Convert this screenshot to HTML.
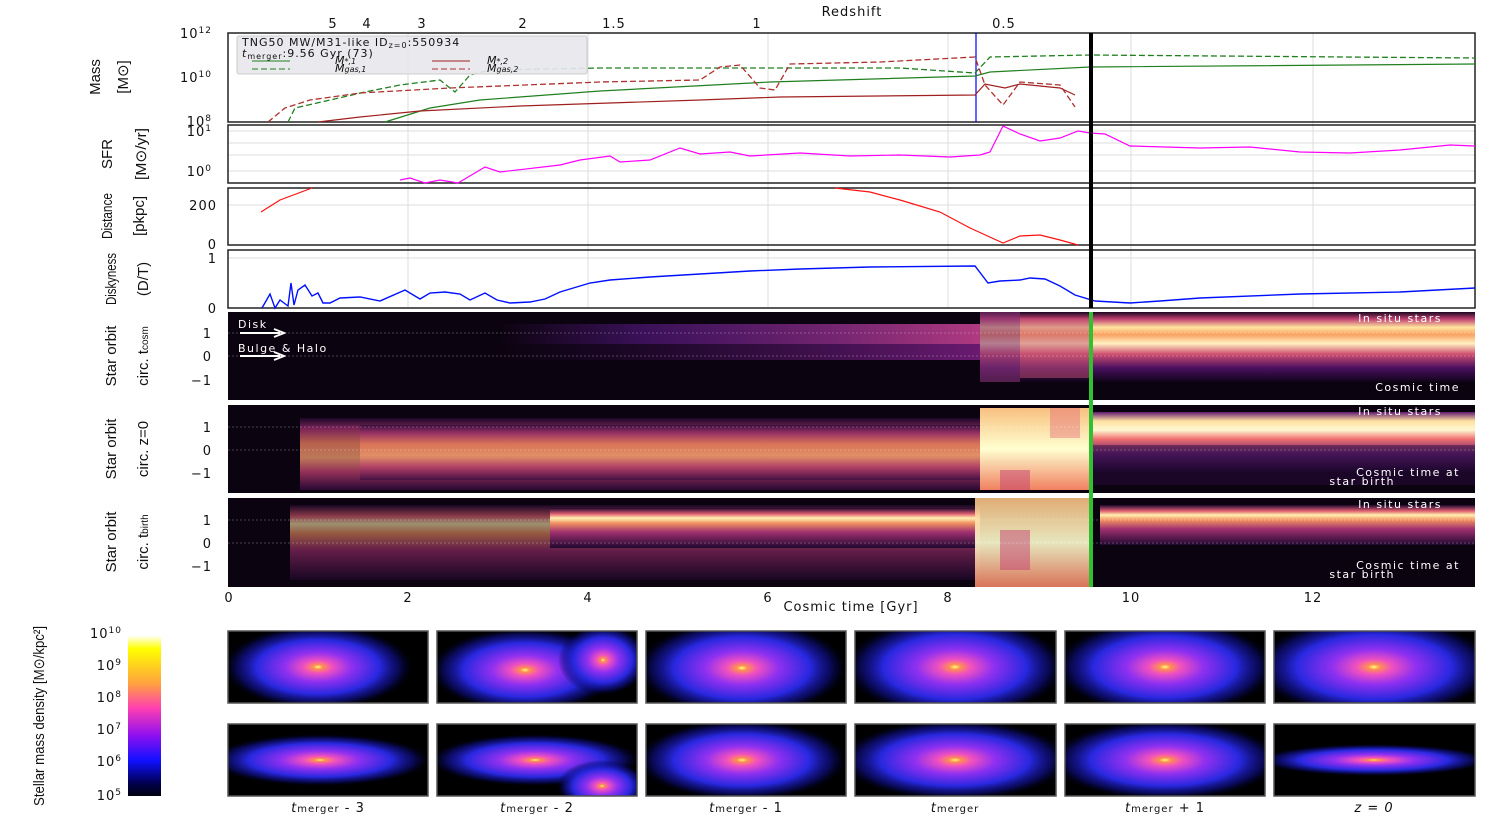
<!DOCTYPE html>
<html><head><meta charset="utf-8"><style>
html,body{margin:0;padding:0;background:#fff;}
svg{display:block;}
text{font-family:"DejaVu Sans","Liberation Sans",sans-serif;fill:#111;}
.lab{font-family:"Liberation Sans",sans-serif;font-size:15px;}
.tk{font-size:13px;letter-spacing:1px;}
.an{font-size:11px;fill:#fff;letter-spacing:1.5px;}
</style></head><body>
<svg width="1495" height="824" viewBox="0 0 1495 824" xmlns="http://www.w3.org/2000/svg">
<defs>
<linearGradient id="cb" x1="0" y1="0" x2="0" y2="1">
<stop offset="0" stop-color="#fffff0"/><stop offset="0.08" stop-color="#ffff00"/><stop offset="0.3" stop-color="#ffa040"/><stop offset="0.45" stop-color="#ff40b0"/><stop offset="0.62" stop-color="#9010f0"/><stop offset="0.78" stop-color="#1010ff"/><stop offset="0.92" stop-color="#000050"/><stop offset="1" stop-color="#000010"/>
</linearGradient>
<radialGradient id="gal">
<stop offset="0" stop-color="#ffff80"/><stop offset="0.05" stop-color="#ff9050"/><stop offset="0.15" stop-color="#f050c0"/><stop offset="0.35" stop-color="#9030f0"/><stop offset="0.65" stop-color="#2828e0"/><stop offset="0.85" stop-color="#101090" stop-opacity="0.6"/><stop offset="1" stop-color="#000030" stop-opacity="0"/>
</radialGradient>
<linearGradient id="h1a" x1="0" y1="0" x2="1" y2="0"><stop offset="0" stop-color="#5a1a8a" stop-opacity="0"/><stop offset="0.3" stop-color="#5a1a8a" stop-opacity="0.6"/><stop offset="1" stop-color="#b03a80"/></linearGradient>
<linearGradient id="h1b" x1="0" y1="0" x2="1" y2="0"><stop offset="0" stop-color="#3a0f60" stop-opacity="0"/><stop offset="1" stop-color="#6a1a70"/></linearGradient>
<linearGradient id="h1c" x1="0" y1="0" x2="0" y2="1"><stop offset="0" stop-color="#1a0520"/><stop offset="0.1" stop-color="#c04070"/><stop offset="0.22" stop-color="#ffe6a0"/><stop offset="0.32" stop-color="#f8a060"/><stop offset="0.45" stop-color="#fff0c0"/><stop offset="0.6" stop-color="#d05070"/><stop offset="0.8" stop-color="#4a1060"/><stop offset="1" stop-color="#100418"/></linearGradient>
<linearGradient id="h2" x1="0" y1="0" x2="0" y2="1"><stop offset="0" stop-color="#200830"/><stop offset="0.15" stop-color="#a03070"/><stop offset="0.35" stop-color="#f08060"/><stop offset="0.55" stop-color="#f8a070"/><stop offset="0.75" stop-color="#c04070"/><stop offset="1" stop-color="#300a40"/></linearGradient>
<linearGradient id="h2r" x1="0" y1="0" x2="0" y2="1"><stop offset="0" stop-color="#601a70"/><stop offset="0.15" stop-color="#ffe0a0"/><stop offset="0.3" stop-color="#fff8d0"/><stop offset="0.45" stop-color="#f07070"/><stop offset="0.7" stop-color="#602070"/><stop offset="1" stop-color="#100418"/></linearGradient>
<linearGradient id="h3" x1="0" y1="0" x2="0" y2="1"><stop offset="0" stop-color="#200830"/><stop offset="0.15" stop-color="#e06070"/><stop offset="0.25" stop-color="#fff0b0"/><stop offset="0.38" stop-color="#f09060"/><stop offset="0.6" stop-color="#a03070"/><stop offset="1" stop-color="#200830"/></linearGradient>
<linearGradient id="hm" x1="0" y1="0" x2="0" y2="1"><stop offset="0" stop-color="#f8c080"/><stop offset="0.5" stop-color="#ffffd0"/><stop offset="1" stop-color="#f08060"/></linearGradient>
<clipPath id="c1"><rect x="228" y="631" width="200" height="72"/></clipPath>
<clipPath id="c2"><rect x="437" y="631" width="200" height="72"/></clipPath>
<clipPath id="c3"><rect x="646" y="631" width="200" height="72"/></clipPath>
<clipPath id="c4"><rect x="855" y="631" width="201" height="72"/></clipPath>
<clipPath id="c5"><rect x="1065" y="631" width="200" height="72"/></clipPath>
<clipPath id="c6"><rect x="1274" y="631" width="201" height="72"/></clipPath>
<clipPath id="d1"><rect x="228" y="724" width="200" height="72"/></clipPath>
<clipPath id="d2"><rect x="437" y="724" width="200" height="72"/></clipPath>
<clipPath id="d3"><rect x="646" y="724" width="200" height="72"/></clipPath>
<clipPath id="d4"><rect x="855" y="724" width="201" height="72"/></clipPath>
<clipPath id="d5"><rect x="1065" y="724" width="200" height="72"/></clipPath>
<clipPath id="d6"><rect x="1274" y="724" width="201" height="72"/></clipPath>
</defs>

<g stroke="#ddd" stroke-width="1">
<line x1="408" y1="33" x2="408" y2="308"/><line x1="588" y1="33" x2="588" y2="308"/><line x1="768" y1="33" x2="768" y2="308"/><line x1="948" y1="33" x2="948" y2="308"/><line x1="1131" y1="33" x2="1131" y2="308"/><line x1="1313" y1="33" x2="1313" y2="308"/>
<line x1="228" y1="131" x2="1475" y2="131"/><line x1="228" y1="143" x2="1475" y2="143"/><line x1="228" y1="155" x2="1475" y2="155"/><line x1="228" y1="171" x2="1475" y2="171"/><line x1="228" y1="205" x2="1475" y2="205"/><line x1="228" y1="258" x2="1475" y2="258"/>
</g>

<text x="852" y="16" class="tk" text-anchor="middle">Redshift</text>
<g class="tk" text-anchor="middle"><text x="333" y="28" class="tk">5</text><text x="367" y="28" class="tk">4</text><text x="422" y="28" class="tk">3</text><text x="523" y="28" class="tk">2</text><text x="614" y="28" class="tk">1.5</text><text x="757" y="28" class="tk">1</text><text x="1004" y="28" class="tk">0.5</text></g>

<rect x="228" y="33" width="1247" height="89" fill="none" stroke="#222" stroke-width="1.5"/>
<line x1="976" y1="33" x2="976" y2="122" stroke="#00f" stroke-width="1.2"/>
<polyline fill="none" stroke="#208020" stroke-width="1.2" points="385,122 430,108 480,100 600,91 770,82 975,76 990,72 1090,67 1475,64"/>
<polyline fill="none" stroke="#a02020" stroke-width="1.2" points="318,122 360,117 420,111 520,106 700,100 780,97 975,95 985,84 1005,88 1020,84 1060,88 1075,95"/>
<polyline fill="none" stroke="#208020" stroke-width="1.3" stroke-dasharray="6,3" points="288,122 295,108 330,100 365,92 400,85 440,80 455,92 470,75 490,70 600,68 900,68 975,73 990,57 1090,55 1475,58"/>
<polyline fill="none" stroke="#b03030" stroke-width="1.3" stroke-dasharray="6,3" points="268,122 285,108 310,100 360,93 450,88 600,82 700,80 720,67 740,65 760,88 775,90 790,64 880,62 975,57 985,85 1003,105 1020,82 1060,85 1075,107"/>
<rect x="237" y="36" width="350" height="38" fill="#e8e8ec" fill-opacity="0.9" stroke="#ccc" rx="2"/>
<text x="242" y="46" font-size="11" letter-spacing="1">TNG50 MW/M31-like ID<tspan font-size="8" dy="2">z=0</tspan><tspan dy="-2">:550934</tspan></text>
<text x="242" y="57" font-size="11" letter-spacing="1"><tspan font-style="italic">t</tspan><tspan font-size="8" dy="2">merger</tspan><tspan dy="-2">:9.56 Gyr (73)</tspan></text>
<line x1="252" y1="61" x2="290" y2="61" stroke="#208020"/><text x="335" y="64" font-size="11" font-style="italic">M<tspan font-size="8">*,1</tspan></text>
<line x1="252" y1="69" x2="290" y2="69" stroke="#208020" stroke-dasharray="6,3"/><text x="335" y="72" font-size="11" font-style="italic">M<tspan font-size="8">gas,1</tspan></text>
<line x1="432" y1="61" x2="470" y2="61" stroke="#a02020"/><text x="487" y="64" font-size="11" font-style="italic">M<tspan font-size="8">*,2</tspan></text>
<line x1="432" y1="69" x2="470" y2="69" stroke="#b03030" stroke-dasharray="6,3"/><text x="487" y="72" font-size="11" font-style="italic">M<tspan font-size="8">gas,2</tspan></text>
<g class="tk" text-anchor="end"><text x="212" y="38">10<tspan font-size="9" dy="-5">12</tspan></text><text x="212" y="82">10<tspan font-size="9" dy="-5">10</tspan></text><text x="212" y="126">10<tspan font-size="9" dy="-5">8</tspan></text></g>
<text class="lab" transform="translate(100,77) rotate(-90)" text-anchor="middle">Mass</text>
<text class="lab" transform="translate(128,77) rotate(-90)" text-anchor="middle">[M⊙]</text>

<rect x="228" y="125" width="1247" height="58" fill="none" stroke="#222" stroke-width="1.5"/>
<polyline fill="none" stroke="#ff00ff" stroke-width="1.2" points="400,180 410,178 425,183 440,180 458,183 485,167 500,172 560,165 580,160 610,156 620,162 650,160 680,148 700,154 730,152 750,156 800,153 850,156 900,155 950,157 980,155 990,152 1003,126 1020,134 1040,141 1060,138 1078,131 1090,133 1105,134 1130,146 1200,148 1250,147 1300,152 1350,153 1400,150 1450,145 1475,146"/>
<g class="tk" text-anchor="end"><text x="212" y="136">10<tspan font-size="9" dy="-5">1</tspan></text><text x="212" y="176">10<tspan font-size="9" dy="-5">0</tspan></text></g>
<text class="lab" transform="translate(112,154) rotate(-90)" text-anchor="middle">SFR</text>
<text class="lab" transform="translate(146,154) rotate(-90)" text-anchor="middle" textLength="52" lengthAdjust="spacingAndGlyphs">[M⊙/yr]</text>

<rect x="228" y="188" width="1247" height="57" fill="none" stroke="#222" stroke-width="1.5"/>
<polyline fill="none" stroke="#ff1010" stroke-width="1.2" points="261,212 280,200 312,188"/>
<polyline fill="none" stroke="#ff1010" stroke-width="1.2" points="835,188 870,192 900,200 940,212 970,228 1003,243 1020,236 1040,235 1060,240 1078,245"/>
<g class="tk" text-anchor="end"><text x="217" y="210">200</text><text x="217" y="249">0</text></g>
<text class="lab" transform="translate(112,216) rotate(-90)" text-anchor="middle" textLength="46" lengthAdjust="spacingAndGlyphs">Distance</text>
<text class="lab" transform="translate(144,216) rotate(-90)" text-anchor="middle" textLength="40" lengthAdjust="spacingAndGlyphs">[pkpc]</text>

<rect x="228" y="250" width="1247" height="58" fill="none" stroke="#222" stroke-width="1.5"/>
<polyline fill="none" stroke="#0010ff" stroke-width="1.4" points="262,308 270,294 275,308 280,300 288,306 291,283 294,305 298,290 305,285 312,296 318,293 323,303 330,303 340,298 360,297 380,301 405,290 420,299 430,293 445,292 460,294 470,300 485,293 497,300 510,303 530,302 545,299 560,292 590,283 610,280 650,277 700,274 750,271 800,269 870,267 975,266 988,283 1000,281 1020,280 1030,278 1045,279 1060,286 1075,295 1095,301 1130,303 1160,301 1200,298 1300,294 1400,292 1475,288"/>
<g class="tk" text-anchor="end"><text x="217" y="263">1</text><text x="217" y="313">0</text></g>
<text class="lab" transform="translate(116,279) rotate(-90)" text-anchor="middle" textLength="52" lengthAdjust="spacingAndGlyphs">Diskyness</text>
<text class="lab" transform="translate(148,279) rotate(-90)" text-anchor="middle">(D/T)</text>

<line x1="1091" y1="33" x2="1091" y2="308" stroke="#000" stroke-width="4"/>

<rect x="228" y="312" width="1247" height="88" fill="#0c0310"/>
<rect x="500" y="324" width="480" height="20" fill="url(#h1a)"/>
<rect x="500" y="344" width="480" height="16" fill="url(#h1b)"/>
<rect x="980" y="312" width="495" height="70" fill="url(#h1c)"/>
<rect x="980" y="312" width="40" height="70" fill="#803070" opacity="0.6"/>
<rect x="1020" y="318" width="70" height="60" fill="#c05070" opacity="0.5"/>
<line x1="228" y1="333" x2="1475" y2="333" stroke="#fff" stroke-opacity="0.5" stroke-dasharray="2,2" stroke-width="0.6"/>
<line x1="228" y1="356" x2="1475" y2="356" stroke="#fff" stroke-opacity="0.5" stroke-dasharray="2,2" stroke-width="0.6"/>
<text x="238" y="328" class="an">Disk</text><path d="M240 333 H280 M274 329 L284 333 L274 337" stroke="#fff" stroke-width="2" fill="none"/>
<text x="238" y="352" class="an">Bulge &amp; Halo</text><path d="M240 356 H280 M274 352 L284 356 L274 360" stroke="#fff" stroke-width="2" fill="none"/>
<text x="1442" y="322" class="an" text-anchor="end">In situ stars</text>
<text x="1460" y="391" class="an" text-anchor="end">Cosmic time</text>

<rect x="228" y="405" width="1247" height="88" fill="#0c0310"/>
<rect x="300" y="418" width="680" height="72" fill="url(#h2)" opacity="0.75"/>
<rect x="360" y="425" width="620" height="55" fill="url(#h2)" opacity="0.6"/>
<rect x="980" y="408" width="110" height="82" fill="url(#hm)"/>
<rect x="1000" y="470" width="30" height="20" fill="#c04070" opacity="0.5"/>
<rect x="1050" y="408" width="30" height="30" fill="#e06070" opacity="0.4"/>
<rect x="1090" y="412" width="385" height="60" fill="url(#h2r)"/>
<rect x="1090" y="445" width="385" height="40" fill="#2a0a40" opacity="0.5"/>
<line x1="228" y1="427" x2="1475" y2="427" stroke="#fff" stroke-opacity="0.5" stroke-dasharray="2,2" stroke-width="0.6"/>
<line x1="228" y1="450" x2="1475" y2="450" stroke="#fff" stroke-opacity="0.5" stroke-dasharray="2,2" stroke-width="0.6"/>
<text x="1442" y="415" class="an" text-anchor="end">In situ stars</text>
<text x="1460" y="476" class="an" text-anchor="end">Cosmic time at</text>
<text x="1395" y="485" class="an" text-anchor="end">star birth</text>

<rect x="228" y="498" width="1247" height="89" fill="#0c0310"/>
<rect x="290" y="505" width="690" height="75" fill="url(#h3)" opacity="0.6"/>
<rect x="550" y="508" width="430" height="40" fill="url(#h3)"/>
<rect x="975" y="498" width="115" height="89" fill="url(#hm)" opacity="0.9"/>
<rect x="1000" y="530" width="30" height="40" fill="#c04070" opacity="0.5"/>
<rect x="1100" y="505" width="375" height="40" fill="url(#h3)"/>
<line x1="228" y1="520" x2="1475" y2="520" stroke="#fff" stroke-opacity="0.5" stroke-dasharray="2,2" stroke-width="0.6"/>
<line x1="228" y1="543" x2="1475" y2="543" stroke="#fff" stroke-opacity="0.5" stroke-dasharray="2,2" stroke-width="0.6"/>
<text x="1442" y="508" class="an" text-anchor="end">In situ stars</text>
<text x="1460" y="569" class="an" text-anchor="end">Cosmic time at</text>
<text x="1395" y="578" class="an" text-anchor="end">star birth</text>

<line x1="1091" y1="312" x2="1091" y2="587" stroke="#30c030" stroke-width="4"/>

<g class="tk" text-anchor="end">
<text x="212" y="338">1</text><text x="212" y="361">0</text><text x="212" y="385">−1</text>
<text x="212" y="432">1</text><text x="212" y="455">0</text><text x="212" y="478">−1</text>
<text x="212" y="525">1</text><text x="212" y="548">0</text><text x="212" y="571">−1</text>
</g>
<text class="lab" transform="translate(116,356) rotate(-90)" text-anchor="middle">Star orbit</text>
<text class="lab" transform="translate(148,356) rotate(-90)" text-anchor="middle">circ. t<tspan font-size="10">cosm</tspan></text>
<text class="lab" transform="translate(116,449) rotate(-90)" text-anchor="middle">Star orbit</text>
<text class="lab" transform="translate(148,449) rotate(-90)" text-anchor="middle">circ. z=0</text>
<text class="lab" transform="translate(116,542) rotate(-90)" text-anchor="middle">Star orbit</text>
<text class="lab" transform="translate(148,542) rotate(-90)" text-anchor="middle">circ. t<tspan font-size="10">birth</tspan></text>

<g class="tk" text-anchor="middle"><text x="229" y="602">0</text><text x="408" y="602">2</text><text x="588" y="602">4</text><text x="768" y="602">6</text><text x="948" y="602">8</text><text x="1131" y="602">10</text><text x="1313" y="602">12</text></g>
<text x="851" y="611" class="tk" text-anchor="middle">Cosmic time [Gyr]</text>

<rect x="128" y="636" width="33" height="160" fill="url(#cb)"/>
<g class="tk" text-anchor="end" font-size="12">
<text x="122" y="638">10<tspan font-size="9" dy="-5">10</tspan></text>
<text x="122" y="670">10<tspan font-size="9" dy="-5">9</tspan></text>
<text x="122" y="702">10<tspan font-size="9" dy="-5">8</tspan></text>
<text x="122" y="734">10<tspan font-size="9" dy="-5">7</tspan></text>
<text x="122" y="766">10<tspan font-size="9" dy="-5">6</tspan></text>
<text x="122" y="800">10<tspan font-size="9" dy="-5">5</tspan></text>
</g>
<text class="lab" transform="translate(44,716) rotate(-90)" text-anchor="middle" font-size="15" textLength="180" lengthAdjust="spacingAndGlyphs">Stellar mass density [M⊙/kpc²]</text>

<g fill="#000">
<rect x="228" y="631" width="200" height="72"/><rect x="437" y="631" width="200" height="72"/><rect x="646" y="631" width="200" height="72"/><rect x="855" y="631" width="201" height="72"/><rect x="1065" y="631" width="200" height="72"/><rect x="1274" y="631" width="201" height="72"/>
<rect x="228" y="724" width="200" height="72"/><rect x="437" y="724" width="200" height="72"/><rect x="646" y="724" width="200" height="72"/><rect x="855" y="724" width="201" height="72"/><rect x="1065" y="724" width="200" height="72"/><rect x="1274" y="724" width="201" height="72"/>
</g>
<ellipse clip-path="url(#c1)" cx="318" cy="667" rx="95" ry="42" fill="url(#gal)"/>
<g clip-path="url(#c2)"><ellipse cx="525" cy="670" rx="95" ry="42" fill="url(#gal)"/><ellipse cx="603" cy="660" rx="45" ry="35" fill="url(#gal)"/></g>
<ellipse clip-path="url(#c3)" cx="742" cy="668" rx="105" ry="48" fill="url(#gal)"/>
<ellipse clip-path="url(#c4)" cx="955" cy="667" rx="110" ry="50" fill="url(#gal)"/>
<ellipse clip-path="url(#c5)" cx="1165" cy="667" rx="110" ry="48" fill="url(#gal)"/>
<ellipse clip-path="url(#c6)" cx="1374" cy="667" rx="120" ry="50" fill="url(#gal)"/>
<ellipse clip-path="url(#d1)" cx="320" cy="760" rx="110" ry="26" fill="url(#gal)"/>
<g clip-path="url(#d2)"><ellipse cx="535" cy="760" rx="105" ry="26" fill="url(#gal)"/><ellipse cx="602" cy="786" rx="45" ry="26" fill="url(#gal)"/></g>
<ellipse clip-path="url(#d3)" cx="742" cy="760" rx="105" ry="40" fill="url(#gal)"/>
<ellipse clip-path="url(#d4)" cx="955" cy="760" rx="115" ry="40" fill="url(#gal)"/>
<ellipse clip-path="url(#d5)" cx="1165" cy="760" rx="115" ry="40" fill="url(#gal)"/>
<ellipse clip-path="url(#d6)" cx="1374" cy="760" rx="115" ry="16" fill="url(#gal)"/>
<g fill="none" stroke="#555" stroke-width="1.5">
<rect x="228" y="631" width="200" height="72"/><rect x="437" y="631" width="200" height="72"/><rect x="646" y="631" width="200" height="72"/><rect x="855" y="631" width="201" height="72"/><rect x="1065" y="631" width="200" height="72"/><rect x="1274" y="631" width="201" height="72"/>
<rect x="228" y="724" width="200" height="72"/><rect x="437" y="724" width="200" height="72"/><rect x="646" y="724" width="200" height="72"/><rect x="855" y="724" width="201" height="72"/><rect x="1065" y="724" width="200" height="72"/><rect x="1274" y="724" width="201" height="72"/>
</g>
<g class="tk" text-anchor="middle" font-size="13">
<text x="328" y="812"><tspan font-style="italic">t</tspan><tspan font-size="10">merger</tspan> - 3</text>
<text x="537" y="812"><tspan font-style="italic">t</tspan><tspan font-size="10">merger</tspan> - 2</text>
<text x="746" y="812"><tspan font-style="italic">t</tspan><tspan font-size="10">merger</tspan> - 1</text>
<text x="955" y="812"><tspan font-style="italic">t</tspan><tspan font-size="10">merger</tspan></text>
<text x="1165" y="812"><tspan font-style="italic">t</tspan><tspan font-size="10">merger</tspan> + 1</text>
<text x="1374" y="812" font-style="italic">z = 0</text>
</g>
</svg>
</body></html>
